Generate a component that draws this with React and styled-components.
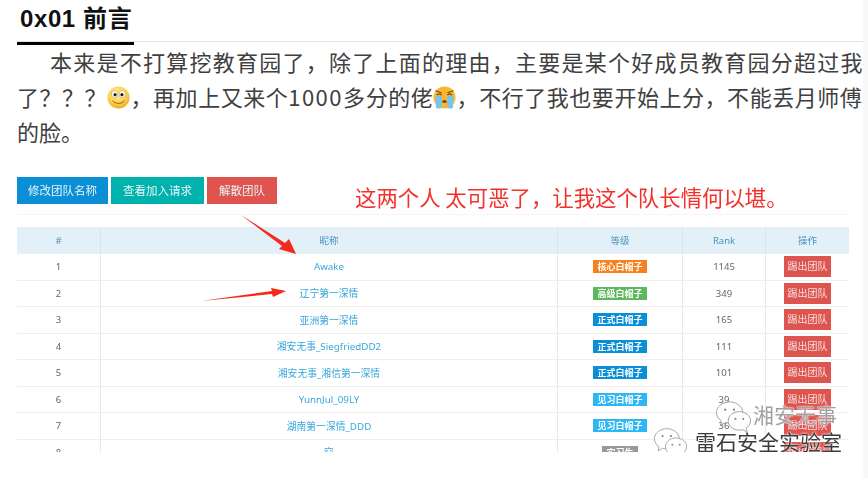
import React from "react";
import styled, { createGlobalStyle } from "styled-components";

const rows = [
    { id: 1, name: "Awake", level: "核心白帽子", tone: "#f5821f", rank: "1145" },
    { id: 2, name: "辽宁第一深情", level: "高级白帽子", tone: "#5cb85c", rank: "349" },
    { id: 3, name: "亚洲第一深情", level: "正式白帽子", tone: "#0a8fd6", rank: "165" },
    { id: 4, name: "湘安无事_SiegfriedDD2", level: "正式白帽子", tone: "#0a8fd6", rank: "111" },
    { id: 5, name: "湘安无事_湘信第一深情", level: "正式白帽子", tone: "#0a8fd6", rank: "101" },
    { id: 6, name: "YunnJul_09LY", level: "见习白帽子", tone: "#2db7f5", rank: "39" },
    { id: 7, name: "湖南第一深情_DDD", level: "见习白帽子", tone: "#2db7f5", rank: "36" },
    { id: 8, name: "空", level: "实习生", tone: "#999999", rank: "30" },
];

const SmileEmoji = () => (
    <EmojiIcon viewBox="0 0 24 24">
        <defs>
            <radialGradient id="smileFace" cx="45%" cy="35%" r="70%">
                <stop offset="0%" stopColor="#fff09a" />
                <stop offset="60%" stopColor="#fcd24c" />
                <stop offset="100%" stopColor="#f0a01e" />
            </radialGradient>
        </defs>
        <circle cx="12" cy="12" r="11.5" fill="url(#smileFace)" />
        <ellipse cx="8" cy="8.5" rx="3.4" ry="3.8" fill="#fff" stroke="#a87a20" strokeWidth="0.5" />
        <ellipse cx="16" cy="8.5" rx="3.4" ry="3.8" fill="#fff" stroke="#a87a20" strokeWidth="0.5" />
        <circle cx="8.4" cy="9" r="1.7" fill="#2c2010" />
        <circle cx="15.6" cy="9" r="1.7" fill="#2c2010" />
        <path d="M6 15.5c2.4 3.6 9.6 3.6 12 0" fill="none" stroke="#8a5a14" strokeWidth="1" strokeLinecap="round" />
    </EmojiIcon>
);

const CryEmoji = () => (
    <EmojiIcon viewBox="0 0 24 24">
        <circle cx="12" cy="12" r="11.5" fill="#fbb62e" />
        <path d="M3 5l5.5 2M21 5l-5.500 2" stroke="#7a4a10" strokeWidth="1.200" strokeLinecap="round" />
        <path d="M4 9.500c1.500-1.400 3.500-1.400 5 0M15 9.500c1.500-1.400 3.500-1.400 5 0" fill="none" stroke="#5a3a10" strokeWidth="1.200" />
        <path d="M10 16c1-1.800 3-1.800 4 0v1.500h-4z" fill="#7a3a14" />
        <rect x="3" y="10" width="6" height="13.500" rx="1.500" fill="#74c6f0" />
        <rect x="15" y="10" width="6" height="13.500" rx="1.500" fill="#74c6f0" />
    </EmojiIcon>
);

const WechatMark = ({ top, left, size }) => (
    <MarkIcon viewBox="0 0 38 34" $top={top} $left={left} $size={size}>
        <path d="M15 2C7.500 2 1.500 7 1.500 13c0 3.500 2 6.500 5 8.500L5.500 26l5-2.700c1.500.4 3 .6 4.500.6C22.500 23.900 28.500 19 28.500 13S22.500 2 15 2z" fill="#ffffff" fillOpacity="0.75" stroke="#8c8c8c" strokeWidth="0.8" />
        <circle cx="10.500" cy="10" r="1.200" fill="#8c8c8c" />
        <circle cx="19.500" cy="10" r="1.200" fill="#8c8c8c" />
        <path d="M25 12c-6.500 0-11.500 4.300-11.500 9.500S18.500 31 25 31c1.300 0 2.500-.2 3.600-.5l4.400 2.500-1-4c2.800-1.700 4.500-4.300 4.500-7.500C36.500 16.300 31.500 12 25 12z" fill="#ffffff" fillOpacity="0.9" stroke="#8c8c8c" strokeWidth="0.8" />
        <circle cx="21" cy="19.500" r="1.100" fill="#8c8c8c" />
        <circle cx="29" cy="19.500" r="1.100" fill="#8c8c8c" />
    </MarkIcon>
);

const App = () => {
    return (
        <Page>
            <GlobalStyle />
            <Main>
                <HeadingBar>
                    <Heading>0x01 前言</Heading>
                </HeadingBar>
                <Paragraph>
                    <FirstLine>本来是不打算挖教育园了，除了上面的理由，主要是某个好成员教育园分超过我</FirstLine>
                    <MiddleLine>了？？？<SmileEmoji />，再加上又来个<Digits>1000</Digits>多分的佬<CryEmoji />，不行了我也要开始上分，不能丢月师傅</MiddleLine>
                    <Line>的脸。</Line>
                </Paragraph>
                <Shot>
                    <Toolbar>
                        <ActionButton $bg="#0a8fd6" $width={91}>修改团队名称</ActionButton>
                        <ActionButton $bg="#00b2ad" $width={93}>查看加入请求</ActionButton>
                        <ActionButton $bg="#e0544f" $width={70}>解散团队</ActionButton>
                        <Caption>这两个人 太可恶了，让我这个队长情何以堪。</Caption>
                    </Toolbar>
                    <Table>
                        <HeadRow>
                            <HeadCell>#</HeadCell>
                            <HeadCell>昵称</HeadCell>
                            <HeadCell>等级</HeadCell>
                            <HeadCell>Rank</HeadCell>
                            <HeadCell>操作</HeadCell>
                        </HeadRow>
                        {rows.map((row) => (
                            <Row key={row.id}>
                                <Cell>{row.id}</Cell>
                                <NameCell>{row.name}</NameCell>
                                <Cell><Badge $bg={row.tone}>{row.level}</Badge></Cell>
                                <Cell>{row.rank}</Cell>
                                <Cell><KickButton>踢出团队</KickButton></Cell>
                            </Row>
                        ))}
                    </Table>
                    <Arrows viewBox="0 0 832 275">
                        <polygon points="224,38 268,66 272,62 279,77 262,72 265,69" fill="#f5281e" />
                        <polygon points="184,124 255,114 254,111 269,114 256,120 255,117" fill="#f5281e" />
                    </Arrows>
                    <WechatMark top={221} left={698} size={37} />
                    <MarkText $top={224} $left={736} $color="#a0a0a0" $size={21}>湘安无事</MarkText>
                    <WechatMark top={248} left={636} size={35} />
                    <MarkText $top={251} $left={678} $color="#3c3c3c" $size={21}>雷石安全实验室</MarkText>
                </Shot>
            </Main>
            <ScrollTrack />
        </Page>
    )
}

const GlobalStyle = createGlobalStyle`
   html, body {
      margin: 0;
      padding: 0;
      background: #fff;
   }
   body {
      font-family: "Noto Sans", "Noto Sans CJK SC", sans-serif;
   }
`;

const Page = styled.div`
   display: flex;
   width: 868px;
   height: 478px;
   overflow: hidden;
   background: #fff;
`;

const Main = styled.div`
   flex: 1;
   min-width: 0;
   padding-left: 17px;
`;

const ScrollTrack = styled.div`
   width: 5px;
   background: #f8f8f8;
`;

const HeadingBar = styled.div`
   height: 41px;
   border-bottom: 1px solid #e2e2e2;
`;

const Heading = styled.h2`
   display: inline-block;
   box-sizing: border-box;
   width: 117px;
   height: 45px;
   margin: 0;
   padding: 4px 0 0 3px;
   border-bottom: 3px solid #000;
   font-family: "Liberation Sans", "Noto Sans CJK SC", sans-serif;
   font-size: 24px;
   line-height: 30px;
   letter-spacing: 0.6px;
   font-weight: 700;
   color: #111;
   white-space: nowrap;
`;

const Paragraph = styled.p`
   width: 845px;
   margin: 2px 0 0;
   font-family: "Noto Sans CJK SC", sans-serif;
   font-size: 22px;
   line-height: 35px;
   color: #404040;
`;

const Line = styled.span`
   display: block;
   white-space: nowrap;
`;

const FirstLine = styled(Line)`
   padding-left: 33px;
   letter-spacing: 1.25px;
`;

const MiddleLine = styled(Line)`
   text-align: justify;
   text-align-last: justify;
   white-space: normal;
   letter-spacing: 0.2px;
`;

const Digits = styled.span`
   letter-spacing: 1.4px;
`;

const EmojiIcon = styled.svg`
   width: 23px;
   height: 23px;
   vertical-align: -3px;
`;

const Shot = styled.div`
   position: relative;
   width: 832px;
   height: 275px;
   margin-top: 27.5px;
   overflow: hidden;
   filter: blur(0.4px);
`;

const Toolbar = styled.div`
   display: flex;
   gap: 3px;
   height: 37px;
   border-bottom: 1px solid #f6f6f6;
`;

const ActionButton = styled.div`
   width: ${(props) => props.$width}px;
   height: 27px;
   background: ${(props) => props.$bg};
   color: #e8f4f8;
   font-size: 11.5px;
   line-height: 27px;
   text-align: center;
`;

const Caption = styled.div`
   margin: 5px 0 0 75px;
   font-family: "Noto Sans CJK SC", sans-serif;
   font-size: 21.4px;
   line-height: 30px;
   color: #f5302a;
   white-space: nowrap;
`;

const Table = styled.div`
   margin-top: 12px;
   font-size: 9.5px;
   color: #666;
`;

const HeadRow = styled.div`
   display: grid;
   grid-template-columns: 83px 457px 125px 83px 84px;
   height: 27.5px;
   background: #e3f0f8;
   color: #4a94c4;
`;

const HeadCell = styled.div`
   display: flex;
   align-items: center;
   justify-content: center;
   border-left: 1px solid #d9e5ec;
   &:first-child {
      border-left: none;
   }
`;

const Row = styled.div`
   display: grid;
   grid-template-columns: 83px 457px 125px 83px 84px;
   height: 26.5px;
   box-sizing: border-box;
   border-bottom: 1px solid #efefef;
`;

const Cell = styled.div`
   display: flex;
   align-items: center;
   justify-content: center;
   border-left: 1px solid #e9e9e9;
   &:first-child {
      border-left: none;
   }
`;

const NameCell = styled(Cell)`
   font-size: 9.8px;
   color: #38a6dc;
`;

const Badge = styled.span`
   display: block;
   padding: 0 4.5px;
   height: 13px;
   background: ${(props) => props.$bg};
   color: #fff;
   font-size: 9px;
   font-weight: 700;
   line-height: 13px;
   text-align: center;
   white-space: nowrap;
`;

const KickButton = styled.div`
   width: 47px;
   height: 21px;
   background: #de5550;
   color: #f6dedd;
   font-size: 10px;
   line-height: 21px;
   text-align: center;
`;

const Arrows = styled.svg`
   position: absolute;
   top: 0;
   left: 0;
   width: 832px;
   height: 275px;
`;

const MarkIcon = styled.svg`
   position: absolute;
   top: ${(props) => props.$top}px;
   left: ${(props) => props.$left}px;
   width: ${(props) => props.$size}px;
   height: ${(props) => props.$size}px;
`;

const MarkText = styled.div`
   position: absolute;
   top: ${(props) => props.$top}px;
   left: ${(props) => props.$left}px;
   font-family: "Noto Sans CJK SC", sans-serif;
   font-size: ${(props) => props.$size}px;
   line-height: 26px;
   color: ${(props) => props.$color};
   text-shadow: 0 0 2px #fff, 0 0 2px #fff;
   white-space: nowrap;
`;

export default App
